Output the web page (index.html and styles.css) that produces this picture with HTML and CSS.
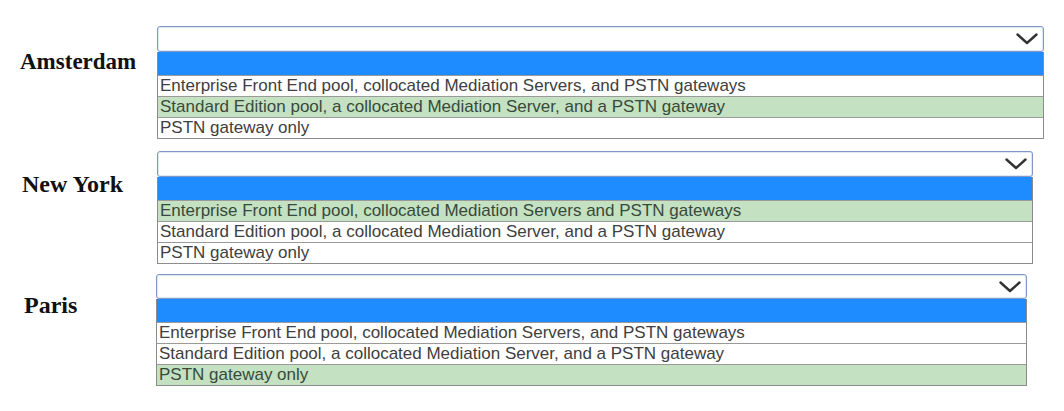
FILE: index.html
```html
<!DOCTYPE html>
<html lang="en">
<head>
<meta charset="utf-8">
<title>Sites</title>
<link rel="stylesheet" href="styles.css">
</head>
<body>
<main class="page">
  <section class="row row--ams">
    <div class="site">Amsterdam</div>
    <div class="widget">
      <div class="select">
        <svg class="chev" viewBox="0 0 22 12" width="22" height="12"><path d="M1.5 1.5 L11 10 L20.5 1.5" fill="none" stroke="#333" stroke-width="2.4" stroke-linecap="round" stroke-linejoin="round"/></svg>
      </div>
      <ul class="list">
        <li class="opt opt--blank"></li>
        <li class="opt">Enterprise Front End pool, collocated Mediation Servers, and PSTN gateways</li>
        <li class="opt opt--picked">Standard Edition pool, a collocated Mediation Server, and a PSTN gateway</li>
        <li class="opt">PSTN gateway only</li>
      </ul>
    </div>
  </section>
  <section class="row row--ny">
    <div class="site">New York</div>
    <div class="widget">
      <div class="select">
        <svg class="chev" viewBox="0 0 22 12" width="22" height="12"><path d="M1.5 1.5 L11 10 L20.5 1.5" fill="none" stroke="#333" stroke-width="2.4" stroke-linecap="round" stroke-linejoin="round"/></svg>
      </div>
      <ul class="list">
        <li class="opt opt--blank"></li>
        <li class="opt opt--picked">Enterprise Front End pool, collocated Mediation Servers and PSTN gateways</li>
        <li class="opt">Standard Edition pool, a collocated Mediation Server, and a PSTN gateway</li>
        <li class="opt">PSTN gateway only</li>
      </ul>
    </div>
  </section>
  <section class="row row--paris">
    <div class="site">Paris</div>
    <div class="widget">
      <div class="select">
        <svg class="chev" viewBox="0 0 22 12" width="22" height="12"><path d="M1.5 1.5 L11 10 L20.5 1.5" fill="none" stroke="#333" stroke-width="2.4" stroke-linecap="round" stroke-linejoin="round"/></svg>
      </div>
      <ul class="list">
        <li class="opt opt--blank"></li>
        <li class="opt">Enterprise Front End pool, collocated Mediation Servers, and PSTN gateways</li>
        <li class="opt">Standard Edition pool, a collocated Mediation Server, and a PSTN gateway</li>
        <li class="opt opt--picked">PSTN gateway only</li>
      </ul>
    </div>
  </section>
</main>
</body>
</html>
```
FILE: styles.css
```css
* { box-sizing: border-box; }
html, body { margin: 0; padding: 0; background: #fff; }
body { width: 1064px; height: 411px; overflow: hidden; }

.page {
  display: flex;
  flex-direction: column;
  padding-top: 26px;
}

.row {
  display: flex;
  align-items: flex-start;
}
.row--ny { margin-top: 12px; }
.row--paris { margin-top: 10px; }

.site {
  font-family: "Liberation Serif", "Times New Roman", serif;
  font-weight: bold;
  font-size: 23px;
  line-height: 23px;
  color: #111;
  width: 157px;
  padding-left: 20px;
  padding-top: 24px;
}
.row--ny .site { padding-left: 22px; padding-top: 22px; font-size: 24px; }
.row--paris .site { width: 156px; padding-left: 24px; padding-top: 20px; font-size: 24px; }

.widget { display: flex; flex-direction: column; width: 887px; }
.row--ny .widget { width: 876px; }
.row--paris .widget { width: 871px; }

.select {
  height: 26px;
  border: 1px solid #7f98c6;
  border-radius: 3px;
  box-shadow: inset 0 0 0 1px #dfe7f4;
  background: #fff;
  display: flex;
  align-items: center;
  justify-content: flex-end;
  padding-right: 5px;
}
.row--paris .select { height: 25px; }

.chev { display: block; }

.list {
  list-style: none;
  margin: 0;
  padding: 0;
  border-left: 1px solid #8c8c8c;
  border-right: 1px solid #8c8c8c;
  border-bottom: 1px solid #8c8c8c;
  font-family: "Liberation Sans", Arial, sans-serif;
  font-size: 17px;
  color: #404040;
}

.opt {
  height: 21px;
  line-height: 20px;
  padding-left: 2px;
  border-top: 1px solid #9a9a9a;
  white-space: nowrap;
  overflow: hidden;
}
.opt--blank {
  height: 23px;
  background: #1e8cff;
  border-top: none;
}
.opt--picked {
  background: #c4e1c1;
  color: #384a3c;
}
```
